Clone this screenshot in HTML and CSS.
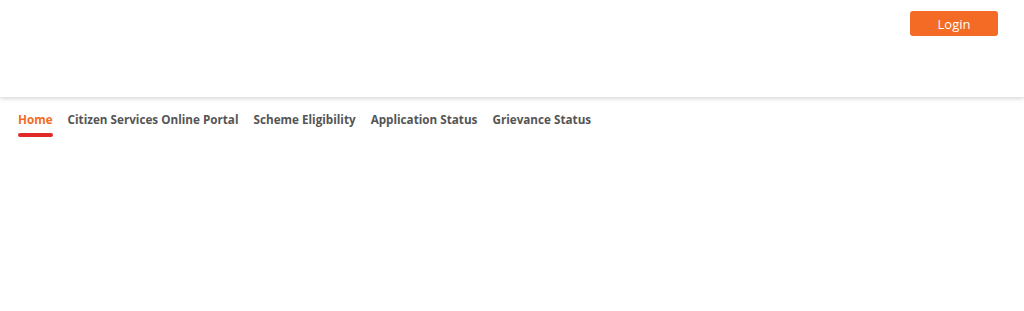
FILE: index.html
```html
<!DOCTYPE html>
<html>
<head>
    <meta charset="UTF-8">
    <meta name="viewport" content="width=device-width, initial-scale=1.0">
    <title>Citizen Services</title>
    <link rel="stylesheet" href="styles.css">
</head>
<body>
    <header class="topbar">
        <button class="login-btn">Login</button>
    </header>
    <nav class="menu">
        <a href="#" class="menu-item active">Home</a>
        <a href="#" class="menu-item">Citizen Services Online Portal</a>
        <a href="#" class="menu-item">Scheme Eligibility</a>
        <a href="#" class="menu-item">Application Status</a>
        <a href="#" class="menu-item">Grievance Status</a>
    </nav>
</body>
</html>
```

FILE: styles.css
```css
body {
    margin: 0;
    padding: 0;
    font-family: "Open Sans", Arial, sans-serif;
    background-color: #fff;
}

.topbar {
    height: 97px;
    display: flex;
    justify-content: flex-end;
    align-items: flex-start;
    padding-right: 26px;
    box-sizing: border-box;
    box-shadow: 0 2px 4px rgba(0, 0, 0, 0.15);
    position: relative;
}

.login-btn {
    margin-top: 11px;
    width: 88px;
    height: 25px;
    border: none;
    border-radius: 3px;
    background-color: #f36b24;
    color: #fff;
    font-family: "Open Sans", Arial, sans-serif;
    font-size: 13px;
    cursor: pointer;
}

.menu {
    display: flex;
    gap: 15px;
    padding: 14px 0 0 18px;
}

.menu-item {
    font-size: 11.7px;
    font-weight: 700;
    color: #555;
    text-decoration: none;
    padding-bottom: 9px;
    position: relative;
    line-height: 17px;
}

.menu-item.active {
    color: #f36b24;
}

.menu-item.active::after {
    content: "";
    position: absolute;
    left: 0;
    right: 0;
    bottom: 0;
    height: 4px;
    border-radius: 2px;
    background-color: #e02a28;
}
```
